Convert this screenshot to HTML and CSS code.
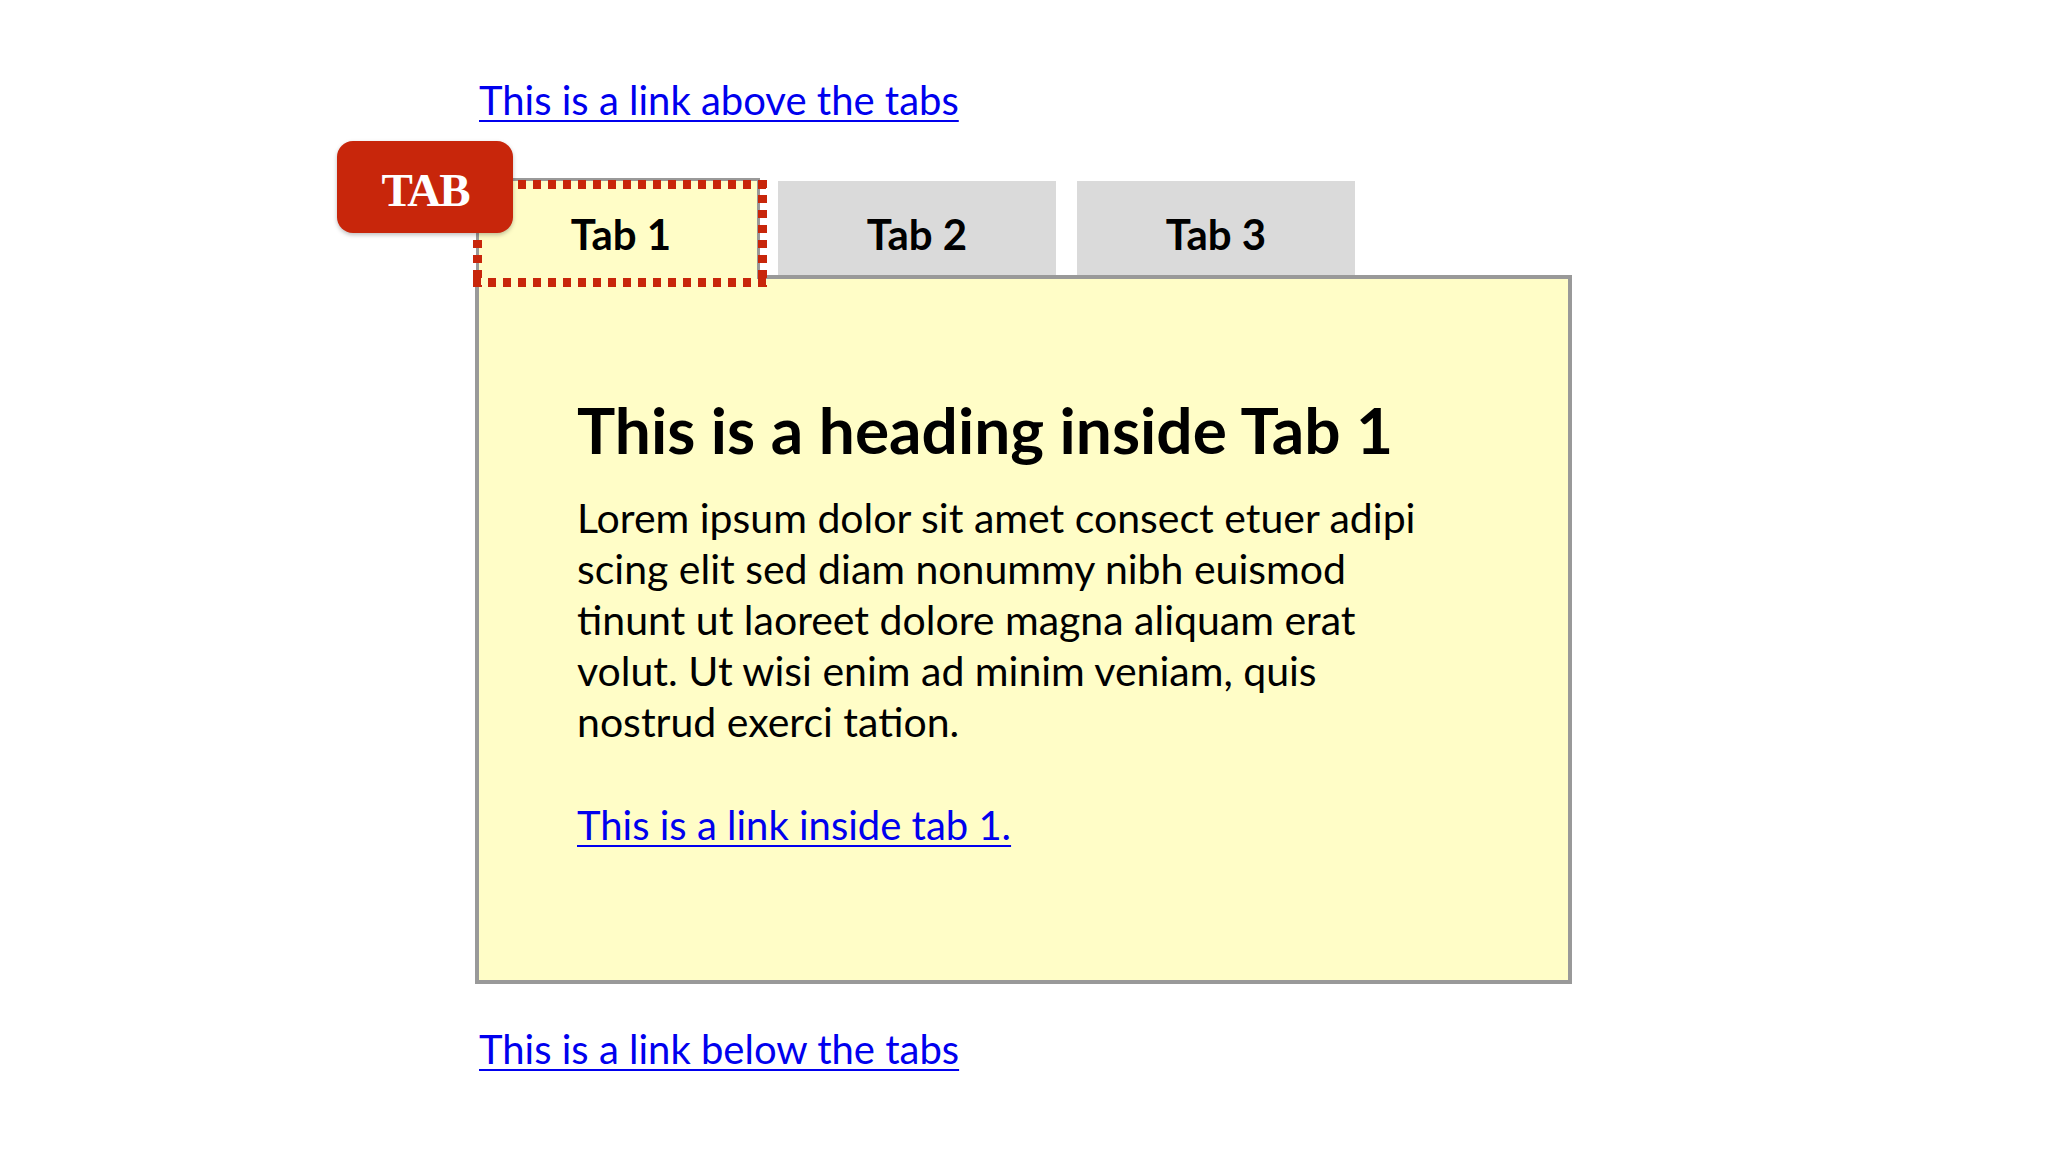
FILE: index.html
```html
<!DOCTYPE html>
<html lang="en">
<head>
    <meta charset="UTF-8">
    <meta name="viewport" content="width=device-width, initial-scale=1.0">
    <title>Tabs</title>
    <link rel="stylesheet" href="styles.css">
</head>
<body>
    <div class="page">
        <a href="#" class="link outer">This is a link above the tabs</a>

        <div class="tabs">
            <div class="badge">TAB</div>
            <div class="tablist" role="tablist">
                <div class="tab active" role="tab" aria-selected="true">
                    Tab 1
                    <span class="focus-ring"></span>
                </div>
                <div class="tab" role="tab">Tab 2</div>
                <div class="tab" role="tab">Tab 3</div>
            </div>
            <div class="panel" role="tabpanel">
                <h2>This is a heading inside Tab 1</h2>
                <p>Lorem ipsum dolor sit amet consect etuer adipi scing elit sed diam nonummy nibh euismod tinunt ut laoreet dolore magna aliquam erat volut. Ut wisi enim ad minim veniam, quis nostrud exerci tation.</p>
                <a href="#" class="link">This is a link inside tab 1.</a>
            </div>
        </div>

        <a href="#" class="link outer below">This is a link below the tabs</a>
    </div>
</body>
</html>
```

FILE: styles.css
```css
body {
    margin: 0;
    font-family: Lato, "Open Sans", sans-serif;
    background: #fff;
    color: #000;
}
.page {
    padding: 75px 0 0 475px;
}
.link {
    display: inline-block;
    font-size: 40px;
    line-height: 51px;
    color: #0000ee;
    text-decoration-thickness: 2px;
    text-underline-offset: 5px;
}
.outer {
    margin-left: 4px;
}
.tabs {
    position: relative;
    width: 1097px;
    margin-top: 52px;
}
.badge {
    position: absolute;
    left: -138px;
    top: -37px;
    z-index: 3;
    width: 176px;
    height: 92px;
    box-sizing: border-box;
    padding-top: 6px;
    display: flex;
    align-items: center;
    justify-content: center;
    background: #c8260b;
    border-radius: 16px;
    box-shadow: 0 2px 4px rgba(0, 0, 0, 0.25);
    color: #fff;
    font-family: "Liberation Serif", serif;
    font-weight: bold;
    font-size: 47px;
    letter-spacing: -2px;
}
.tablist {
    display: flex;
    align-items: flex-start;
    margin-bottom: -4px;
    position: relative;
    z-index: 1;
}
.tab {
    width: 278px;
    height: 94px;
    margin-top: 3px;
    box-sizing: border-box;
    padding-top: 12px;
    display: flex;
    align-items: center;
    justify-content: center;
    background: #dadada;
    font-size: 42px;
    font-weight: bold;
}
.tab + .tab {
    margin-left: 21px;
}
.tab.active {
    position: relative;
    width: 284px;
    height: 101px;
    margin: 0 -3px 0 1px;
    padding-left: 6px;
    padding-bottom: 4px;
    background: #fffdc7;
    border: 3px solid #999;
    border-bottom: none;
}
/* keyboard focus indicator, square dots */
.focus-ring {
    position: absolute;
    left: -6px;
    top: -1px;
    width: 294px;
    height: 107px;
    background:
        repeating-linear-gradient(90deg, #c8260b 0 8px, transparent 8px 15px) top / 100% 9px no-repeat,
        repeating-linear-gradient(90deg, #c8260b 0 8px, transparent 8px 15px) bottom / 100% 9px no-repeat,
        repeating-linear-gradient(180deg, #c8260b 0 8px, transparent 8px 15px) left / 9px 100% no-repeat,
        repeating-linear-gradient(180deg, #c8260b 0 8px, transparent 8px 15px) right / 9px 100% no-repeat;
}
.panel {
    height: 709px;
    box-sizing: border-box;
    padding: 113px 0 0 98px;
    background: #fffdc7;
    border: 4px solid #999;
}
.panel h2 {
    margin: 0;
    font-size: 64px;
    line-height: 1.2;
    font-weight: bold;
}
.panel p {
    width: 855px;
    margin: 23px 0 53px;
    font-size: 41px;
    line-height: 51px;
}
.below {
    margin-top: 40px;
}
```
